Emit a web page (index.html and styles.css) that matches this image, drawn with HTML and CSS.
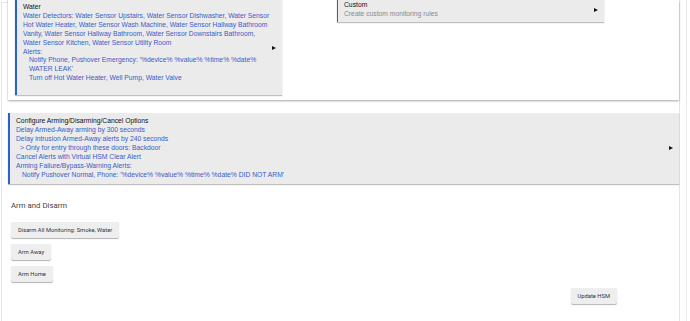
FILE: index.html
```html
<!DOCTYPE html>
<html lang="en">
  <head>
    <meta charset="UTF-8" />
    <meta name="viewport" content="width=device-width, initial-scale=1.0" />
    <title>Hubitat Safety Monitor</title>
    <link rel="stylesheet" href="styles.css">
  </head>
  <body>
    <div class="shell">
      <main class="page">
        <section class="card">
          <div class="tile tile-blue water">
            <div class="tile-body">
              <div class="tile-title">Water</div>
              <div class="tile-text">Water Detectors: Water Sensor Upstairs, Water Sensor Dishwasher, Water Sensor Hot Water Heater, Water Sensor Wash Machine, Water Sensor Hallway Bathroom Vanity, Water Sensor Hallway Bathroom, Water Sensor Downstairs Bathroom, Water Sensor Kitchen, Water Sensor Utility Room</div>
              <div class="tile-text">Alerts:</div>
              <div class="tile-text indent">Notify Phone, Pushover Emergency: '%device% %value% %time% %date% WATER LEAK'</div>
              <div class="tile-text indent">Turn off Hot Water Heater, Well Pump, Water Valve</div>
            </div>
            <span class="arrow"></span>
          </div>
          <div class="tile tile-gray custom">
            <div class="tile-body">
              <div class="tile-title">Custom</div>
              <div class="tile-desc">Create custom monitoring rules</div>
            </div>
            <span class="arrow"></span>
          </div>
        </section>

        <div class="tile tile-blue options">
          <div class="tile-body">
            <div class="tile-title">Configure Arming/Disarming/Cancel Options</div>
            <div class="tile-text">Delay Armed-Away arming by 300 seconds</div>
            <div class="tile-text">Delay intrusion Armed-Away alerts by 240 seconds</div>
            <div class="tile-text small-indent">&gt; Only for entry through these doors: Backdoor</div>
            <div class="tile-text">Cancel Alerts with Virtual HSM Clear Alert</div>
            <div class="tile-text">Arming Failure/Bypass-Warning Alerts:</div>
            <div class="tile-text indent">Notify Pushover Normal, Phone: '%device% %value% %time% %date% DID NOT ARM'</div>
          </div>
          <span class="arrow"></span>
        </div>

        <h3 class="arm-title">Arm and Disarm</h3>
        <div class="arm-buttons">
          <button class="btn">Disarm All Monitoring: Smoke, Water</button>
          <button class="btn">Arm Away</button>
          <button class="btn">Arm Home</button>
        </div>
        <div class="update-row">
          <button class="btn">Update HSM</button>
        </div>
      </main>
      <div class="rail"></div>
    </div>
  </body>
</html>
```

FILE: styles.css
```css
* {
  box-sizing: border-box;
}
body {
  margin: 0;
  background-color: white;
  font-family: "Liberation Sans", Arial, sans-serif;
  overflow: hidden;
}
.shell {
  display: flex;
  height: 321px;
}
.page {
  width: 679px;
  margin-left: 1px;
  border-left: 1px solid #e4e4e4;
  border-right: 1px solid #e4e4e4;
  border-top: 1px solid #e9e6f5;
  margin-top: 2px;
}
.rail {
  width: 1px;
  margin-left: 6px;
  background-color: #ececec;
}
.card {
  display: flex;
  align-items: flex-start;
  gap: 55px;
  margin: -5px 0 0 6px;
  padding: 0 7px 5px 7px;
  background-color: white;
  box-shadow: 0 1px 2px rgba(0, 0, 0, 0.35);
}
.tile {
  display: flex;
  align-items: center;
  background-color: #ebebeb;
  box-shadow: 0 1px 1px rgba(0, 0, 0, 0.25);
  font-size: 6.75px;
  line-height: 8.9px;
}
.tile-blue {
  border-left: 2px solid #2a62c9;
}
.tile-gray {
  border-left: 1px solid #5e5e5e;
}
.tile-body {
  flex: 1;
}
.tile-title {
  color: #111;
}
.tile-text {
  color: #3a5cc9;
}
.tile-desc {
  color: #8a8a8a;
}
.indent {
  padding-left: 6px;
}
.small-indent {
  padding-left: 4px;
}
.arrow {
  width: 0;
  height: 0;
  border-top: 2.5px solid transparent;
  border-bottom: 2.5px solid transparent;
  border-left: 4px solid #111;
}
.water {
  width: 267px;
  padding: 5px 6px 12px 6px;
}
.water .arrow {
  margin-top: 10px;
}
.custom {
  width: 267px;
  padding: 3px 6px 3px 6px;
}
.options {
  margin: 13px 0 0 6px;
  padding: 4px 6px 4px 6px;
}
.arm-title {
  margin: 17px 0 0 0;
  padding-left: 9px;
  font-family: Roboto, "Liberation Sans", sans-serif;
  font-weight: normal;
  font-size: 7.8px;
  line-height: 10px;
  color: #444;
}
.arm-buttons {
  display: flex;
  flex-direction: column;
  align-items: flex-start;
  gap: 6px;
  margin-top: 11px;
  padding-left: 9px;
}
.btn {
  height: 16px;
  padding: 0 7px;
  border: none;
  border-radius: 2px;
  background-color: #eeeeee;
  box-shadow: 0 1px 1px rgba(0, 0, 0, 0.3);
  font-family: Roboto, "Liberation Sans", sans-serif;
  font-size: 5.8px;
  color: #333;
}
.update-row {
  display: flex;
  justify-content: flex-end;
  margin-top: 6px;
  padding-right: 62px;
}
```
